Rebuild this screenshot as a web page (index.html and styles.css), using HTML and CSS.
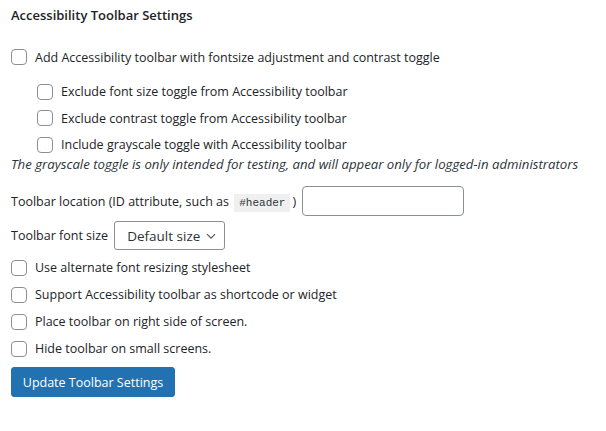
FILE: index.html
```html
<!DOCTYPE html>
<html lang="en">
<head>
    <meta charset="UTF-8">
    <title>Accessibility Toolbar Settings</title>
    <link rel="stylesheet" href="styles.css">
</head>
<body>
    <form class="settings">
        <h2 class="title">Accessibility Toolbar Settings</h2>

        <label class="check main"><input type="checkbox"> Add Accessibility toolbar with fontsize adjustment and contrast toggle</label>

        <div class="sub">
            <label class="check"><input type="checkbox"> Exclude font size toggle from Accessibility toolbar</label>
            <label class="check"><input type="checkbox"> Exclude contrast toggle from Accessibility toolbar</label>
            <label class="check"><input type="checkbox"> Include grayscale toggle with Accessibility toolbar</label>
        </div>
        <p class="desc">The grayscale toggle is only intended for testing, and will appear only for logged-in administrators</p>

        <div class="field location">
            <label for="location">Toolbar location (ID attribute, such as <code>#header</code>)</label>
            <input type="text" id="location" class="text">
        </div>

        <div class="field size">
            <label for="fontsize">Toolbar font size</label>
            <div class="select">
                <span>Default size</span>
                <svg width="10" height="10" viewBox="0 0 10 10"><path d="M1 3.2 5 7.2l4-4" fill="none" stroke="#50575e" stroke-width="1.2"/></svg>
            </div>
        </div>

        <div class="options">
            <label class="check"><input type="checkbox"> Use alternate font resizing stylesheet</label>
            <label class="check"><input type="checkbox"> Support Accessibility toolbar as shortcode or widget</label>
            <label class="check"><input type="checkbox"> Place toolbar on right side of screen.</label>
            <label class="check"><input type="checkbox"> Hide toolbar on small screens.</label>
        </div>

        <button type="button" class="btn">Update Toolbar Settings</button>
    </form>
</body>
</html>
```

FILE: styles.css
```css
* {
    margin: 0;
    padding: 0;
    box-sizing: border-box;
}

body {
    background: #fff;
    color: #1d2327;
    font-family: "Open Sans", Arial, sans-serif;
    font-size: 12.5px;
    padding: 0 11px;
}

.title {
    font-size: 13px;
    font-weight: 600;
    line-height: 20px;
    padding-top: 5px;
}

.check {
    display: flex;
    align-items: center;
    gap: 8px;
    height: 26.5px;
}

.check input {
    appearance: none;
    width: 16px;
    height: 16px;
    border: 1px solid #8c8f94;
    border-radius: 4px;
    background: #fff;
    flex: none;
}

.main {
    margin-top: 19px;
}

.sub {
    padding-left: 26px;
    margin-top: 8px;
}

.desc {
    font-style: italic;
    font-size: 13.2px;
    line-height: 16px;
    margin-top: -2px;
    color: #2c3338;
}

.field {
    display: flex;
    align-items: center;
    gap: 6px;
}

.location {
    margin-top: 14px;
    height: 30px;
}

code {
    font-family: "Liberation Mono", monospace;
    font-size: 11px;
    color: #2c3338;
    background: #f0f0f1;
    padding: 3px 5px;
    margin: 0 2px;
}

.text {
    width: 162px;
    height: 30px;
    border: 1px solid #8c8f94;
    border-radius: 4px;
}

.size {
    margin-top: 5px;
    height: 29px;
}

.select {
    display: flex;
    align-items: center;
    justify-content: space-between;
    width: 111px;
    height: 29px;
    padding: 0 8px 0 12px;
    border: 1px solid #8c8f94;
    border-radius: 3px;
    font-size: 13.5px;
    color: #2c3338;
}

.options {
    margin-top: 4px;
}

.options .check {
    height: 27px;
}

.btn {
    display: block;
    margin-top: 5px;
    width: 164px;
    height: 30px;
    background: #2271b1;
    color: #fff;
    border: 1px solid #2271b1;
    border-radius: 3px;
    font-family: inherit;
    font-size: 12.5px;
}
```
